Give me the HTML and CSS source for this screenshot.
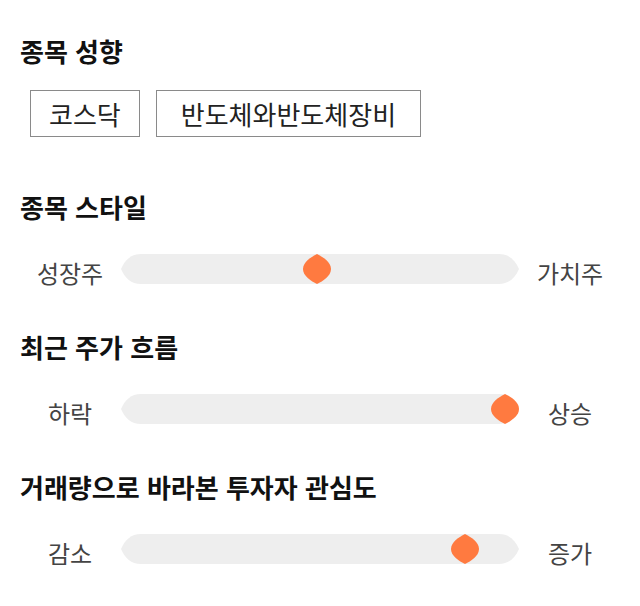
FILE: index.html
```html
<!DOCTYPE html>
<html lang="ko">
<head>
<meta charset="utf-8">
<link rel="stylesheet" href="styles.css">
</head>
<body>
<main class="page">
  <section class="section section-first">
    <h2 class="heading">종목 성향</h2>
    <div class="chips">
      <span class="chip chip-short">코스닥</span>
      <span class="chip chip-long">반도체와반도체장비</span>
    </div>
  </section>

  <section class="section">
    <h2 class="heading">종목 스타일</h2>
    <div class="slider-row">
      <span class="label">성장주</span>
      <div class="track">
        <svg class="track-bg" width="398" height="30" viewBox="0 0 398 30"><path d="M0 15 C4 6 10 0 20 0 H378 C388 0 394 6 398 15 C394 24 388 30 378 30 H20 C10 30 4 24 0 15 Z" fill="#eeeeee"/></svg>
        <svg class="thumb" style="left:182px" width="28" height="30" viewBox="0 0 28 30"><path d="M14 0 C20 3 28 8 28 15 C28 22 20 27 14 30 C8 27 0 22 0 15 C0 8 8 3 14 0 Z" fill="#ff7a40"/></svg>
      </div>
      <span class="label">가치주</span>
    </div>
  </section>

  <section class="section">
    <h2 class="heading">최근 주가 흐름</h2>
    <div class="slider-row">
      <span class="label">하락</span>
      <div class="track">
        <svg class="track-bg" width="398" height="30" viewBox="0 0 398 30"><path d="M0 15 C4 6 10 0 20 0 H378 C388 0 394 6 398 15 C394 24 388 30 378 30 H20 C10 30 4 24 0 15 Z" fill="#eeeeee"/></svg>
        <svg class="thumb" style="left:370px" width="28" height="30" viewBox="0 0 28 30"><path d="M14 0 C20 3 28 8 28 15 C28 22 20 27 14 30 C8 27 0 22 0 15 C0 8 8 3 14 0 Z" fill="#ff7a40"/></svg>
      </div>
      <span class="label">상승</span>
    </div>
  </section>

  <section class="section">
    <h2 class="heading">거래량으로 바라본 투자자 관심도</h2>
    <div class="slider-row">
      <span class="label">감소</span>
      <div class="track">
        <svg class="track-bg" width="398" height="30" viewBox="0 0 398 30"><path d="M0 15 C4 6 10 0 20 0 H378 C388 0 394 6 398 15 C394 24 388 30 378 30 H20 C10 30 4 24 0 15 Z" fill="#eeeeee"/></svg>
        <svg class="thumb" style="left:330px" width="28" height="30" viewBox="0 0 28 30"><path d="M14 0 C20 3 28 8 28 15 C28 22 20 27 14 30 C8 27 0 22 0 15 C0 8 8 3 14 0 Z" fill="#ff7a40"/></svg>
      </div>
      <span class="label">증가</span>
    </div>
  </section>
</main>
</body>
</html>
```

FILE: styles.css
```css
html, body {
  margin: 0;
  padding: 0;
  background: #ffffff;
}

body {
  font-family: "Noto Sans CJK KR", "Noto Sans", sans-serif;
  color: #111111;
}

.page {
  width: 600px;
  padding: 33px 20px 0 20px;
}

.section {
  margin-top: 35px;
}

.section-first {
  margin-top: 0;
  margin-bottom: 52px;
}

.section-first + .section {
  margin-top: 0;
}

.heading {
  margin: 0;
  font-size: 26px;
  line-height: 36px;
  font-weight: 700;
  color: #111111;
}

.chips {
  display: flex;
  gap: 16px;
  margin-top: 21px;
  padding-left: 10px;
}

.chip {
  display: inline-flex;
  align-items: center;
  justify-content: center;
  height: 47px;
  box-sizing: border-box;
  border: 1px solid #8a8a8a;
  font-size: 26px;
  color: #222222;
}

.chip-short {
  padding: 0 18px;
}

.chip-long {
  padding: 0 24px;
}

.slider-row {
  display: grid;
  grid-template-columns: 100px 1fr 100px;
  align-items: center;
  height: 50px;
  margin-top: 19px;
}

.label {
  text-align: center;
  font-size: 24px;
  color: #444444;
  padding-top: 6px;
}

.track {
  position: relative;
  height: 30px;
  margin: 0 1px;
}

.track-bg {
  display: block;
}

.thumb {
  position: absolute;
  top: 0;
  display: block;
}
```
